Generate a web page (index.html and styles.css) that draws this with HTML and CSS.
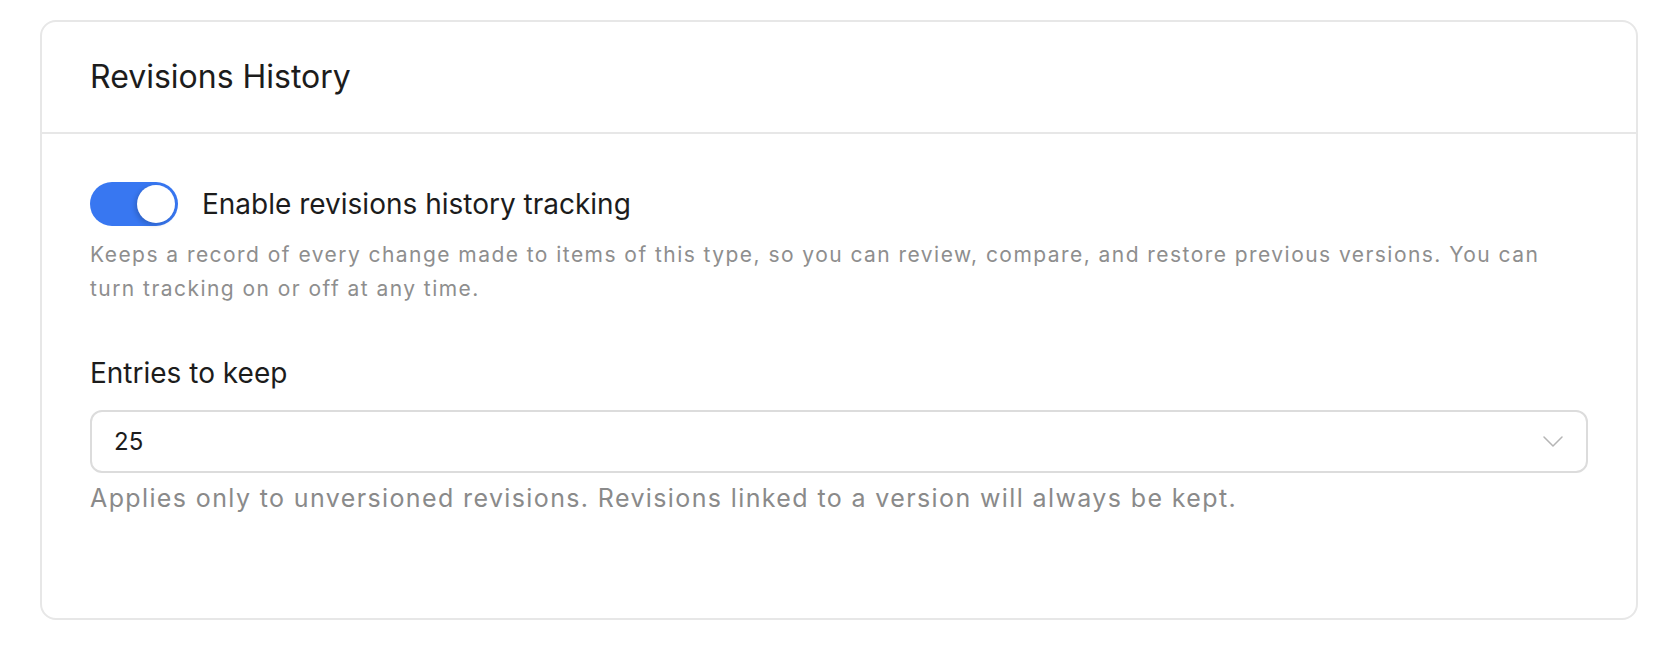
FILE: index.html
```html
<!DOCTYPE html>
<html lang="en">
<head>
<meta charset="utf-8">
<title>Revisions History</title>
<link rel="stylesheet" href="styles.css">
</head>
<body>
  <section class="card">
    <header class="card-header">
      <h2 class="card-title">Revisions History</h2>
    </header>
    <div class="card-body">
      <div class="toggle-row">
        <span class="toggle is-on" role="switch" aria-checked="true"><span class="toggle-knob"></span></span>
        <span class="toggle-label">Enable revisions history tracking</span>
      </div>
      <p class="description">Keeps a record of every change made to items of this type, so you can review, compare, and restore previous versions. You can turn tracking on or off at any time.</p>

      <div class="field">
        <label class="field-label">Entries to keep</label>
        <div class="select">
          <span class="select-value">25</span>
          <svg class="select-chevron" width="20" height="11" viewBox="0 0 20 11" aria-hidden="true">
            <path d="M1 1 L10 10 L19 1" fill="none" stroke="#b5b5b5" stroke-width="1.5" stroke-linecap="round" stroke-linejoin="round"/>
          </svg>
        </div>
        <p class="help">Applies only to unversioned revisions. Revisions linked to a version will always be kept.</p>
      </div>
    </div>
  </section>
</body>
</html>
```

FILE: styles.css
```css
* { box-sizing: border-box; }

html, body {
  margin: 0;
  padding: 0;
  background: #ffffff;
}

body {
  font-family: Inter, "Noto Sans", "Liberation Sans", sans-serif;
  color: #1f1f1f;
  padding: 20px 38px 0 40px;
}

.card {
  border: 2px solid #e7e7e7;
  border-radius: 16px;
  background: #fff;
  height: 600px;
}

.card-header {
  height: 112px;
  border-bottom: 2px solid #e7e7e7;
  display: flex;
  align-items: center;
  padding: 0 48px;
}

.card-title {
  margin: 0;
  font-size: 32px;
  font-weight: 400;
  color: #1c1c1c;
  padding-bottom: 2px;
}

.card-body {
  padding: 48px 48px 0 48px;
}

.toggle-row {
  display: flex;
  align-items: center;
  gap: 24px;
}

.toggle {
  width: 88px;
  height: 44px;
  border-radius: 22px;
  background: #3877f1;
  display: flex;
  align-items: center;
  justify-content: flex-end;
  padding: 0 3px;
  flex: none;
}

.toggle-knob {
  width: 38px;
  height: 38px;
  border-radius: 50%;
  background: #fff;
  box-shadow: -2px 2px 5px rgba(0, 0, 0, 0.18);
}

.toggle-label {
  font-size: 28px;
  color: #1c1c1c;
}

.description {
  margin: 12px 0 0 0;
  font-size: 21px;
  letter-spacing: 1.45px;
  line-height: 34px;
  color: #8e8e8e;
}

.field {
  margin-top: 48px;
}

.field-label {
  display: block;
  font-size: 28px;
  line-height: 38px;
  color: #1c1c1c;
}

.select {
  margin-top: 18px;
  height: 63px;
  border: 2px solid #dcdcdc;
  border-radius: 12px;
  display: flex;
  align-items: center;
  justify-content: space-between;
  padding: 0 23px 0 22px;
}

.select-value {
  font-size: 24px;
  color: #1c1c1c;
}

.select-chevron {
  display: block;
}

.help {
  margin: 8px 0 0 0;
  font-size: 25px;
  letter-spacing: 1.38px;
  line-height: 34px;
  color: #8a8a8a;
}
```
